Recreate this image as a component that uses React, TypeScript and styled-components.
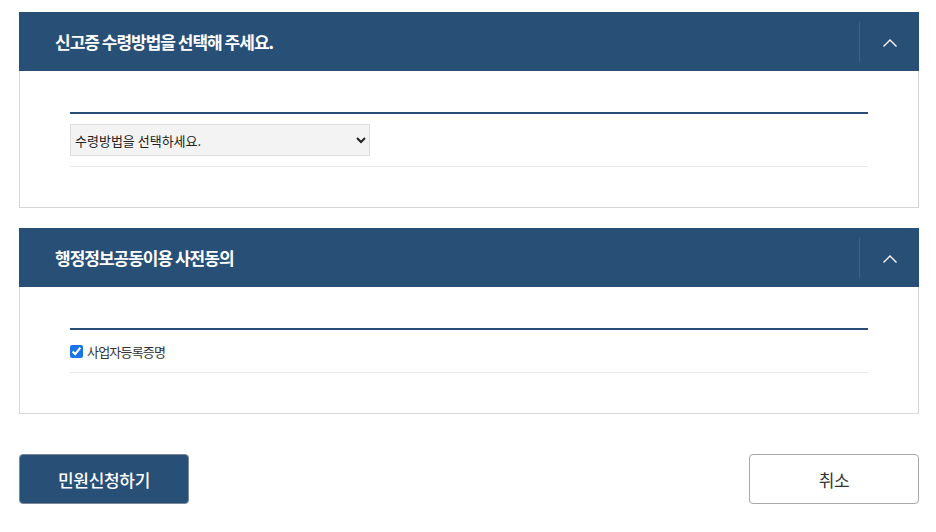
import React from "react";
import styled, { createGlobalStyle } from "styled-components";

const Global = createGlobalStyle`
  html, body { margin: 0; padding: 0; background: #fff; }
  body { font-family: "Noto Sans CJK KR", "Noto Sans", sans-serif; color: #333; }
  * { box-sizing: border-box; }
`;

const Page = styled.div`
  width: 936px;
  padding: 12px 17px 0 19px;
  display: flex;
  flex-direction: column;
`;

const Panel = styled.section<{ $gap?: number }>`
  border: 1px solid #d6d6d6;
  border-top: none;
  margin-bottom: ${(p) => p.$gap ?? 0}px;
  display: flex;
  flex-direction: column;
`;

const Header = styled.div`
  height: 59px;
  margin: 0 -1px;
  background: #284f76;
  display: flex;
  align-items: center;
  padding-left: 36px;
`;

const Title = styled.h2`
  flex: 1;
  margin: 0;
  color: #fff;
  font-size: 17px;
  font-weight: 700;
  letter-spacing: -1px;
`;

const Toggle = styled.button`
  width: 60px;
  height: 40px;
  border: none;
  border-left: 1px solid #3d6289;
  background: transparent;
  display: flex;
  align-items: center;
  justify-content: center;
  padding: 3px 0 0 0;
  cursor: pointer;
`;

const Body = styled.div`
  padding: 41px 50px 40px;
`;

const Field = styled.div`
  border-top: 2px solid #284f76;
  border-bottom: 1px solid #e9e9e9;
`;

const SelectRow = styled.div`
  padding: 10px 0;
`;

const Select = styled.select`
  width: 300px;
  height: 32px;
  background: #f3f3f3;
  border: 1px solid #dcdcdc;
  font-family: "Noto Sans CJK KR", sans-serif;
  font-size: 13px;
  color: #222;
  padding: 0;
  letter-spacing: 0;
`;

const CheckRow = styled.label`
  height: 42px;
  display: flex;
  align-items: center;
  gap: 4px;
  font-size: 13px;
  letter-spacing: -0.8px;
  color: #333;
`;

const Check = styled.input`
  margin: 0;
  width: 13px;
  height: 13px;
  accent-color: #1a73e8;
`;

const Actions = styled.div`
  margin-top: 40px;
  display: flex;
  justify-content: space-between;
`;

const Btn = styled.button<{ $primary?: boolean }>`
  width: 170px;
  height: 50px;
  border-radius: 4px;
  font-family: "Noto Sans CJK KR", sans-serif;
  font-size: 17px;
  font-weight: ${(p) => (p.$primary ? 500 : 400)};
  letter-spacing: -0.3px;
  background: ${(p) => (p.$primary ? "#284f76" : "#fff")};
  color: ${(p) => (p.$primary ? "#fff" : "#333")};
  border: 1px solid ${(p) => (p.$primary ? "#7a8a9a" : "#a8a8a8")};
  cursor: pointer;
`;

const Chevron = () => (
  <svg width="16" height="10" viewBox="0 0 16 10">
    <path d="M1.5 8.5 L8 2 L14.5 8.5" fill="none" stroke="#fff" strokeWidth="1.4" />
  </svg>
);

export default function App() {
  return (
    <>
      <Global />
      <Page>
        <Panel $gap={20}>
          <Header>
            <Title>신고증 수령방법을 선택해 주세요.</Title>
            <Toggle aria-label="접기"><Chevron /></Toggle>
          </Header>
          <Body>
            <Field>
              <SelectRow>
                <Select defaultValue="">
                  <option value="">수령방법을 선택하세요.</option>
                </Select>
              </SelectRow>
            </Field>
          </Body>
        </Panel>
        <Panel>
          <Header>
            <Title>행정정보공동이용 사전동의</Title>
            <Toggle aria-label="접기"><Chevron /></Toggle>
          </Header>
          <Body>
            <Field>
              <CheckRow>
                <Check type="checkbox" defaultChecked />
                사업자등록증명
              </CheckRow>
            </Field>
          </Body>
        </Panel>
        <Actions>
          <Btn $primary>민원신청하기</Btn>
          <Btn>취소</Btn>
        </Actions>
      </Page>
    </>
  );
}
